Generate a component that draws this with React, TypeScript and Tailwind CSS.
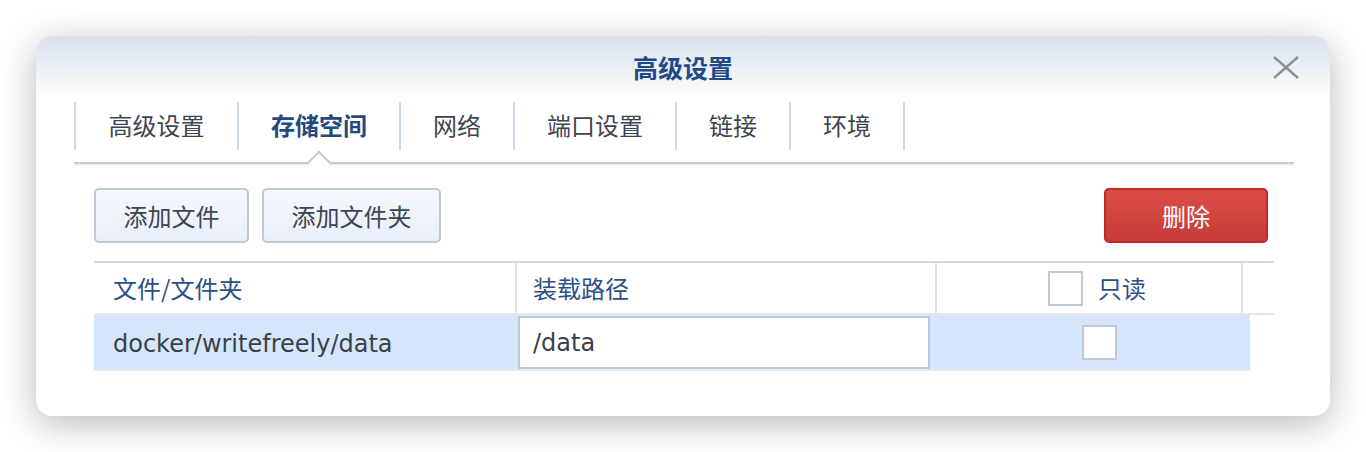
import React from "react";

const cjk = { fontFamily: '"Noto Sans CJK SC", "Noto Sans", sans-serif' };
const latin = { fontFamily: '"DejaVu Sans", "Noto Sans CJK SC", sans-serif' };

const tabs = [
  { label: "高级设置", w: "w-[163px]" },
  { label: "存储空间", w: "w-[162px]", active: true },
  { label: "网络", w: "w-[114px]" },
  { label: "端口设置", w: "w-[162px]" },
  { label: "链接", w: "w-[114px]" },
  { label: "环境", w: "w-[116px] border-r-2" },
];

function Checkbox() {
  return <span className="block h-[35px] w-[35px] shrink-0 border-2 border-[#bfc8d4] bg-white" />;
}

function CloseIcon() {
  return (
    <svg width="26" height="23" viewBox="0 0 26 23" className="text-[#8b9099]">
      <path d="M1 1 L25 22 M25 1 L1 22" stroke="currentColor" strokeWidth="2.4" fill="none" />
    </svg>
  );
}

export default function App() {
  return (
    <div className="h-[452px] w-[1366px] bg-white pl-[36px] pt-[36px]" style={cjk}>
      <div className="relative h-[380px] w-[1294px] rounded-[16px] bg-white shadow-[0_8px_36px_rgba(0,0,0,0.28)]">
        {/* title bar */}
        <div className="relative flex h-[64px] items-center justify-center rounded-t-[16px] bg-gradient-to-b from-[#d8e1ec] to-white">
          <span className="text-[25px] font-bold text-[#1f4a85]">高级设置</span>
          <button className="absolute right-[31px] top-[20px]">
            <CloseIcon />
          </button>
        </div>

        {/* tabs */}
        <div className="ml-[38px] mr-[36px] mt-[2px]">
          <div className="flex">
            {tabs.map((t) => (
              <div
                key={t.label}
                className={`relative flex h-[48px] items-center justify-center border-l-2 border-[#cfdae7] pb-[2px] text-[24px] ${t.w} ${
                  t.active ? "font-bold text-[#23497e]" : "text-[#3e4551]"
                }`}
              >
                {t.label}
                {t.active && (
                  <span className="absolute left-1/2 top-[51.5px] z-10 h-[17px] w-[17px] -translate-x-1/2 rotate-45 border-l-2 border-t-2 border-[#cbcbcb] bg-white" />
                )}
              </div>
            ))}
          </div>
          <div className="mt-[12px] h-[2px] bg-[#cbcbcb] shadow-[0_1px_2px_rgba(0,0,0,0.12)]" />
        </div>

        {/* content */}
        <div className="pl-[58px] pr-[56px] pt-[24px]">
          <div className="flex items-center">
            <button className="h-[55px] w-[155px] rounded-[5px] border-2 border-[#c0cad7] bg-gradient-to-b from-[#f6f9fe] to-[#e8eef8] text-[24px] text-[#3e4551]">
              添加文件
            </button>
            <button className="ml-[13px] h-[55px] w-[179px] rounded-[5px] border-2 border-[#c0cad7] bg-gradient-to-b from-[#f6f9fe] to-[#e8eef8] text-[24px] text-[#3e4551]">
              添加文件夹
            </button>
            <button className="ml-auto mr-[6px] h-[55px] w-[164px] rounded-[5px] border-2 border-[#bd2b2c] bg-gradient-to-b from-[#dc4c45] to-[#c63c38] text-[24px] text-white">
              删除
            </button>
          </div>

          {/* table */}
          <div className="mt-[18px]">
            <div className="flex h-[54px] border-b-2 border-t-2 border-b-[#e2e8f0] border-t-[#cfdae7] text-[24px] text-[#2b5086]">
              <div className="flex w-[421px] items-center pl-[19px]">文件/文件夹</div>
              <div className="flex w-[420px] items-center border-l-2 border-[#d9e3ef] pl-[16px]">装载路径</div>
              <div className="flex w-[306px] items-center border-l-2 border-[#d9e3ef] pl-[111px]">
                <Checkbox />
                <span className="ml-[15px]">只读</span>
              </div>
              <div className="flex-1 border-l-2 border-[#d9e3ef]" />
            </div>
            <div className="flex h-[56px] w-[1156px] items-center border-b-2 border-[#e3e9f1] bg-[#d6e6fa]">
              <div className="w-[421px] pl-[19px] pt-[4px] text-[24px] text-[#3a4049]" style={latin}>
                docker/writefreely/data
              </div>
              <div
                className="ml-[3px] flex h-[53px] w-[412px] items-center border-2 border-[#bfc9d6] bg-white pl-[13px] pt-[2px] text-[24px] text-[#3a4049]"
                style={latin}
              >
                /data
              </div>
              <div className="ml-[152px]">
                <Checkbox />
              </div>
            </div>
          </div>
        </div>
      </div>
    </div>
  );
}
